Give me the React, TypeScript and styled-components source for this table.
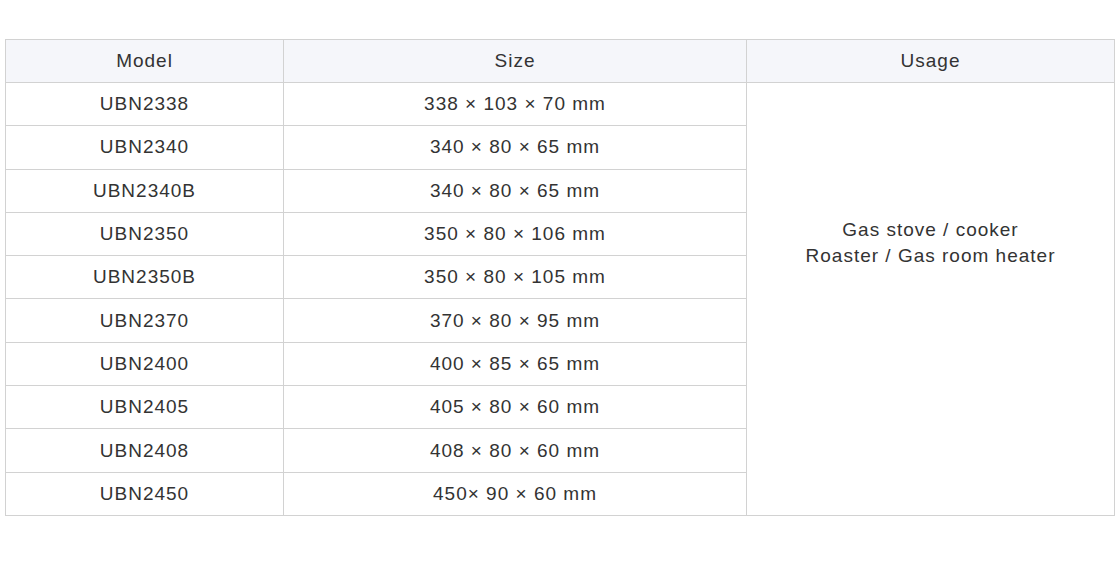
import React from "react";
import styled, { createGlobalStyle } from "styled-components";

const Global = createGlobalStyle`
  html, body {
    margin: 0;
    padding: 0;
    background: #ffffff;
  }
  body {
    font-family: "Liberation Sans", Arial, sans-serif;
    color: #333333;
  }
`;

const Page = styled.div`
  padding: 39px 6px 0 5px;
  width: 1120px;
  box-sizing: border-box;
`;

const Table = styled.table`
  width: 1109px;
  border-collapse: collapse;
  table-layout: fixed;
  font-size: 19px;
  letter-spacing: 1px;
  color: #333333;
`;

const Col = styled.col<{ $w: number }>`
  width: ${(p) => p.$w}px;
`;

const HeadRow = styled.tr`
  height: 43px;
  background: #f5f6fa;
`;

const BodyRow = styled.tr`
  height: 43.3px;
`;

const HeadCell = styled.th`
  border: 1px solid #d2d2d2;
  font-weight: normal;
  text-align: center;
  vertical-align: middle;
  padding: 0;
`;

const Cell = styled.td`
  border: 1px solid #d2d2d2;
  text-align: center;
  vertical-align: middle;
  padding: 0;
  line-height: 22px;
`;

const UsageCell = styled.td`
  border: 1px solid #d2d2d2;
  text-align: center;
  vertical-align: middle;
  padding: 0 0 112px 0;
  line-height: 26px;
`;

const rows = [
  ["UBN2338", "338 × 103 × 70 mm"],
  ["UBN2340", "340 × 80 × 65 mm"],
  ["UBN2340B", "340 × 80 × 65 mm"],
  ["UBN2350", "350 × 80 × 106 mm"],
  ["UBN2350B", "350 × 80 × 105 mm"],
  ["UBN2370", "370 × 80 × 95 mm"],
  ["UBN2400", "400 × 85 × 65 mm"],
  ["UBN2405", "405 × 80 × 60 mm"],
  ["UBN2408", "408 × 80 × 60 mm"],
  ["UBN2450", "450× 90 × 60 mm"],
];

export default function App() {
  return (
    <Page>
      <Global />
      <Table>
        <colgroup>
          <Col $w={278} />
          <Col $w={463} />
          <Col $w={368} />
        </colgroup>
        <thead>
          <HeadRow>
            <HeadCell>Model</HeadCell>
            <HeadCell>Size</HeadCell>
            <HeadCell>Usage</HeadCell>
          </HeadRow>
        </thead>
        <tbody>
          {rows.map(([m, s], i) => (
            <BodyRow key={m}>
              <Cell>{m}</Cell>
              <Cell>{s}</Cell>
              {i === 0 && (
                <UsageCell rowSpan={rows.length}>
                  Gas stove / cooker
                  <br />
                  Roaster / Gas room heater
                </UsageCell>
              )}
            </BodyRow>
          ))}
        </tbody>
      </Table>
    </Page>
  );
}
